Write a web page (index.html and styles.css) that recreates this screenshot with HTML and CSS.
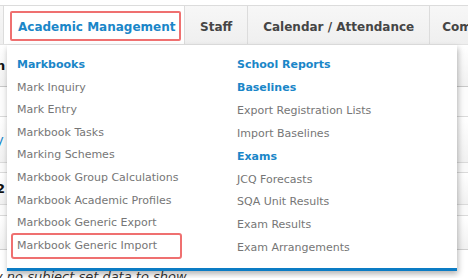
FILE: index.html
```html
<!DOCTYPE html>
<html>
<head>
<meta charset="utf-8">
<link rel="stylesheet" href="styles.css">
</head>
<body>
<div class="page">
  <nav class="nav">
    <div class="nav-item nav-stub"></div>
    <div class="nav-item nav-active"><span class="nav-mark">Academic Management</span></div>
    <div class="nav-item">Staff</div>
    <div class="nav-item">Calendar / Attendance</div>
    <div class="nav-item nav-last">Com</div>
  </nav>
  <div class="content">
    <div class="row row-a"><span class="edge edge-bold">n</span></div>
    <div class="row row-b"></div>
    <div class="row row-c"><span class="edge edge-blue">y</span></div>
    <div class="row row-d"></div>
    <div class="row row-e"><span class="edge edge-bold">2</span></div>
    <div class="row row-f"></div>
    <div class="row row-g"></div>
    <div class="note">y no subject set data to show</div>
  </div>
  <div class="menu">
    <ul class="col col-left">
      <li class="head">Markbooks</li>
      <li>Mark Inquiry</li>
      <li>Mark Entry</li>
      <li>Markbook Tasks</li>
      <li>Marking Schemes</li>
      <li>Markbook Group Calculations</li>
      <li>Markbook Academic Profiles</li>
      <li>Markbook Generic Export</li>
      <li class="marked">Markbook Generic Import</li>
    </ul>
    <ul class="col col-right">
      <li class="head">School Reports</li>
      <li class="head">Baselines</li>
      <li>Export Registration Lists</li>
      <li>Import Baselines</li>
      <li class="head">Exams</li>
      <li>JCQ Forecasts</li>
      <li>SQA Unit Results</li>
      <li>Exam Results</li>
      <li>Exam Arrangements</li>
    </ul>
  </div>
</div>
</body>
</html>
```
FILE: styles.css
```css
html, body {
  margin: 0;
  padding: 0;
  background: #fff;
}
.page {
  position: relative;
  width: 468px;
  height: 278px;
  overflow: hidden;
  font-family: "DejaVu Sans", Verdana, sans-serif;
  padding-top: 5px;
  box-sizing: border-box;
}
.nav {
  display: flex;
  height: 40px;
  border-top: 1px solid #dcdcdc;
  border-bottom: 1px solid #e2e2e2;
  background: linear-gradient(#f7f7f7, #efefef);
  box-sizing: border-box;
  white-space: nowrap;
  overflow: hidden;
}
.nav-item {
  flex: none;
  display: flex;
  align-items: center;
  padding: 2px 15px 0 15px;
  font-size: 12px;
  font-weight: bold;
  color: #454545;
  border-right: 1px solid #dcdcdc;
  height: 39px;
  box-sizing: border-box;
}
.nav-stub {
  width: 4px;
  padding: 0;
}
.nav-active {
  width: 181px;
  padding: 0;
  background: #fff;
  height: 40px;
  align-items: flex-start;
}
.nav-mark {
  display: block;
  margin: 5px 0 0 6px;
  width: 171px;
  height: 30px;
  box-sizing: border-box;
  border: 2px solid #ef7070;
  border-radius: 2px;
  padding: 1px 0 0 6px;
  line-height: 26px;
  color: #1a86c8;
}
.nav-last {
  border-right: none;
  padding-left: 12px;
}
.content {
  position: relative;
}
.row {
  border-bottom: 1px solid #dadada;
  box-sizing: border-box;
  background: linear-gradient(#ffffff, #f1f1f1);
  display: flex;
  align-items: center;
}
.row-a { height: 42px; border-bottom-color: #c8c8c8; }
.row-b { height: 30px; background: #fcfcfc; }
.row-c { height: 46px; }
.row-d { height: 10px; background: #fafafa; }
.row-e { height: 32px; }
.row-f { height: 11px; background: #fafafa; }
.row-g { height: 34px; border-bottom-color: #cfcfcf; }
.edge {
  font-size: 13px;
  margin-left: -4px;
}
.edge-bold {
  font-weight: bold;
  color: #111;
}
.edge-blue {
  color: #1a86c8;
}
.note {
  margin: 19px 0 0 -5px;
  font-size: 13px;
  font-style: italic;
  color: #333;
  white-space: nowrap;
}
.menu {
  position: absolute;
  top: 45px;
  left: 7px;
  width: 450px;
  height: 226px;
  box-sizing: border-box;
  background: #fff;
  border-bottom: 3px solid #0c7cc4;
  box-shadow: 1px 3px 6px rgba(0, 0, 0, 0.3);
  display: grid;
  grid-template-columns: 220px 1fr;
  padding: 9px 0 0 6px;
}
.col {
  list-style: none;
  margin: 0;
  padding: 0;
  font-size: 11px;
  color: #767676;
}
.col-left li { line-height: 22.6px; }
.col-right li { line-height: 22.9px; }
.col li {
  padding-left: 4px;
  white-space: nowrap;
}
.col .head {
  font-weight: bold;
  color: #1a86c8;
}
.col .marked {
  width: 167px;
  box-sizing: border-box;
  outline: 2px solid #ef7070;
  border-radius: 1px;
}
```
